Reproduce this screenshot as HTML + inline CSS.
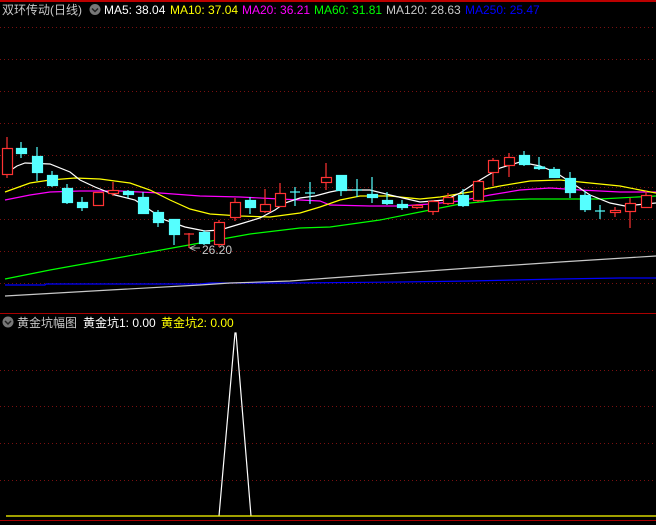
<!DOCTYPE html>
<html><head><meta charset="utf-8"><style>
html,body{margin:0;padding:0;background:#000;width:656px;height:525px;overflow:hidden}
svg{display:block}
text{font-family:"Liberation Sans","Noto Sans CJK SC",sans-serif;font-size:12px}
</style></head><body>
<svg width="656" height="525" viewBox="0 0 656 525" xmlns="http://www.w3.org/2000/svg">
<rect width="656" height="525" fill="#000"/>
<line x1="0" y1="1" x2="656" y2="1" stroke="#b00" stroke-width="2"/>
<g stroke="#7a1010" stroke-width="1" stroke-dasharray="1,3">
<line x1="0" y1="27.5" x2="656" y2="27.5"/><line x1="0" y1="59.5" x2="656" y2="59.5"/>
<line x1="0" y1="91.5" x2="656" y2="91.5"/><line x1="0" y1="123.5" x2="656" y2="123.5"/>
<line x1="0" y1="155.5" x2="656" y2="155.5"/><line x1="0" y1="187.5" x2="656" y2="187.5"/>
<line x1="0" y1="219.5" x2="656" y2="219.5"/><line x1="0" y1="251.5" x2="656" y2="251.5"/>
<line x1="0" y1="283.5" x2="656" y2="283.5"/>
<line x1="0" y1="370.5" x2="656" y2="370.5"/><line x1="0" y1="406.5" x2="656" y2="406.5"/>
<line x1="0" y1="443.5" x2="656" y2="443.5"/><line x1="0" y1="480.5" x2="656" y2="480.5"/>
</g>
<line x1="0" y1="313.5" x2="656" y2="313.5" stroke="#a00" stroke-width="1"/>
<line x1="0" y1="520.5" x2="656" y2="520.5" stroke="#a00" stroke-width="1"/>

<!-- MA lines -->
<g fill="none" stroke-width="1.2">
<polyline stroke="#0000ff" points="5,285 45,285 46,284 200,284 210,283 290,283 400,282 470,281 560,279 620,278 656,278"/>
<polyline stroke="#c8c8c8" points="5,296 110,290 200,285 230,283 290,281 330,278 400,273 470,268 560,262 656,256"/>
<polyline stroke="#00ff00" points="5,279 50,270 100,261 150,252 200,243 250,234 300,228 330,227 380,220 420,212 460,204 500,200 530,199 600,199 656,196"/>
<polyline stroke="#ff00ff" points="5,200 30,195 50,192 80,191 120,191 160,193 200,196 240,197 280,199 320,201 330,205 370,206 400,206 430,204 460,201 490,195 520,190 550,188 580,190 620,192 656,192"/>
<polyline stroke="#ffff00" points="5,192 30,183 50,180 75,178 100,179 130,183 150,190 170,200 190,209 210,214 240,216 270,217 300,213 320,207 340,200 360,196 390,196 420,199 440,197 470,192 500,186 530,181 560,180 590,183 620,186 640,190 656,193"/>
<polyline stroke="#ffffff" points="5,174 17,166 25,163 50,164 70,172 80,180 95,187 115,195 135,200 150,210 165,220 185,227 205,231 220,230 240,224 260,218 275,210 285,203 300,198 315,196 330,192 340,190 370,190 390,195 420,202 445,200 460,193 480,180 500,168 520,162 540,166 555,172 575,185 590,195 610,203 625,206 645,204 656,203"/>
</g>

<!-- candles -->
<g stroke-width="1.2">
<g stroke="#ff3333" fill="#000">
<line x1="7" y1="137" x2="7" y2="178"/><rect x="2.5" y="148.5" width="10" height="26"/>
<rect x="93.5" y="192.5" width="10" height="13"/>
<line x1="113" y1="182" x2="113" y2="196"/><rect x="108.5" y="190.5" width="10" height="3"/>
<line x1="189" y1="233" x2="189" y2="248"/><line x1="184" y1="234" x2="194" y2="234"/>
<line x1="219" y1="220" x2="219" y2="247"/><rect x="214.5" y="222.5" width="10" height="22"/>
<line x1="235" y1="198" x2="235" y2="221"/><rect x="230.5" y="202.5" width="10" height="15"/>
<line x1="265" y1="189" x2="265" y2="213"/><rect x="260.5" y="204.5" width="10" height="7"/>
<line x1="280" y1="183" x2="280" y2="207"/><rect x="275.5" y="193.5" width="10" height="13"/>
<line x1="326" y1="163" x2="326" y2="190"/><rect x="321.5" y="177.5" width="10" height="5"/>
<line x1="417" y1="204" x2="417" y2="209"/><rect x="412.5" y="205.5" width="10" height="2"/>
<line x1="433" y1="200" x2="433" y2="215"/><rect x="428.5" y="201.5" width="10" height="10"/>
<line x1="448" y1="193" x2="448" y2="205"/><rect x="443.5" y="197.5" width="10" height="6"/>
<line x1="478" y1="180" x2="478" y2="202"/><rect x="473.5" y="181.5" width="10" height="19"/>
<line x1="493" y1="158" x2="493" y2="186"/><rect x="488.5" y="160.5" width="10" height="12"/>
<line x1="509" y1="153" x2="509" y2="177"/><rect x="504.5" y="157.5" width="10" height="8"/>
<line x1="615" y1="207" x2="615" y2="217"/><rect x="610.5" y="210.5" width="10" height="2"/>
<line x1="630" y1="198" x2="630" y2="228"/><rect x="625.5" y="203.5" width="10" height="8"/>
<line x1="646" y1="191" x2="646" y2="208"/><rect x="641.5" y="195.5" width="10" height="12"/>
</g>
<g stroke="#55ffff" fill="#55ffff">
<line x1="21" y1="142" x2="21" y2="158"/><rect x="16.5" y="148.5" width="10" height="5"/>
<line x1="37" y1="147" x2="37" y2="181"/><rect x="32.5" y="156.5" width="10" height="16"/>
<line x1="52" y1="171" x2="52" y2="187"/><rect x="47.5" y="175.5" width="10" height="10"/>
<line x1="67" y1="184" x2="67" y2="204"/><rect x="62.5" y="188.5" width="10" height="14"/>
<line x1="82" y1="197" x2="82" y2="211"/><rect x="77.5" y="202.5" width="10" height="5"/>
<line x1="128" y1="190" x2="128" y2="198"/><rect x="123.5" y="191.5" width="10" height="3"/>
<line x1="143" y1="192" x2="143" y2="214"/><rect x="138.5" y="197.5" width="10" height="16"/>
<line x1="158" y1="210" x2="158" y2="227"/><rect x="153.5" y="212.5" width="10" height="10"/>
<line x1="174" y1="219" x2="174" y2="245"/><rect x="169.5" y="219.5" width="10" height="15"/>
<line x1="204" y1="230" x2="204" y2="245"/><rect x="199.5" y="232.5" width="10" height="11"/>
<line x1="250" y1="197" x2="250" y2="214"/><rect x="245.5" y="200.5" width="10" height="7"/>
<line x1="295" y1="187" x2="295" y2="206"/><line x1="290" y1="192" x2="300" y2="192"/>
<line x1="310" y1="182" x2="310" y2="204"/><line x1="305" y1="193" x2="315" y2="193"/>
<line x1="341" y1="175" x2="341" y2="196"/><rect x="336.5" y="175.5" width="10" height="15"/>
<line x1="357" y1="179" x2="357" y2="197"/><line x1="352" y1="190" x2="362" y2="190"/>
<line x1="372" y1="177" x2="372" y2="203"/><rect x="367.5" y="194.5" width="10" height="3"/>
<line x1="387" y1="192" x2="387" y2="205"/><rect x="382.5" y="200.5" width="10" height="3"/>
<line x1="402" y1="200" x2="402" y2="210"/><rect x="397.5" y="204.5" width="10" height="3"/>
<line x1="463" y1="189" x2="463" y2="207"/><rect x="458.5" y="195.5" width="10" height="10"/>
<line x1="524" y1="151" x2="524" y2="166"/><rect x="519.5" y="155.5" width="10" height="9"/>
<line x1="539" y1="157" x2="539" y2="170"/><rect x="534.5" y="167" width="10" height="1.5"/>
<line x1="554" y1="167" x2="554" y2="178"/><rect x="549.5" y="169.5" width="10" height="8"/>
<line x1="570" y1="172" x2="570" y2="198"/><rect x="565.5" y="178.5" width="10" height="14"/>
<line x1="585" y1="191" x2="585" y2="212"/><rect x="580.5" y="195.5" width="10" height="14"/>
<line x1="600" y1="205" x2="600" y2="219"/><line x1="595" y1="211" x2="605" y2="211"/>
</g>
</g>
<line x1="190" y1="248" x2="200" y2="248" stroke="#bbb"/>
<text x="189" y="252" fill="#bbb" font-size="11">&lt;</text>
<text x="202" y="254" fill="#c8c8c8">26.20</text>

<!-- header -->
<text x="2" y="14" fill="#c8c8c8" font-size="13">双环传动(日线)</text>
<circle cx="95" cy="9.5" r="5.5" fill="#777"/><path d="M92 8.5 L95 11.5 L98 8.5" stroke="#222" fill="none" stroke-width="1.5"/>
<text x="104" y="14" fill="#fff">MA5: 38.04</text>
<text x="170" y="14" fill="#ffff00">MA10: 37.04</text>
<text x="242" y="14" fill="#ff00ff">MA20: 36.21</text>
<text x="314" y="14" fill="#00ff00">MA60: 31.81</text>
<text x="386" y="14" fill="#c8c8c8">MA120: 28.63</text>
<text x="465" y="14" fill="#0000ff">MA250: 25.47</text>

<!-- lower panel -->
<circle cx="8" cy="322" r="5.5" fill="#777"/><path d="M5 321 L8 324 L11 321" stroke="#222" fill="none" stroke-width="1.5"/>
<text x="17" y="327" fill="#c8c8c8" font-size="13">黄金坑幅图</text>
<text x="83" y="327" fill="#fff" font-size="13">黄金坑1: 0.00</text>
<text x="161" y="327" fill="#ffff00" font-size="13">黄金坑2: 0.00</text>
<polyline fill="none" stroke="#fff" stroke-width="1.2" points="219,516 235,333 236,333 251,516"/>
<line x1="6" y1="516" x2="656" y2="516" stroke="#ffff00" stroke-width="1.2"/>
<text x="17" y="534" fill="#c8c8c8" font-size="13">MACD(12,26,9)</text>
</svg>
</body></html>
